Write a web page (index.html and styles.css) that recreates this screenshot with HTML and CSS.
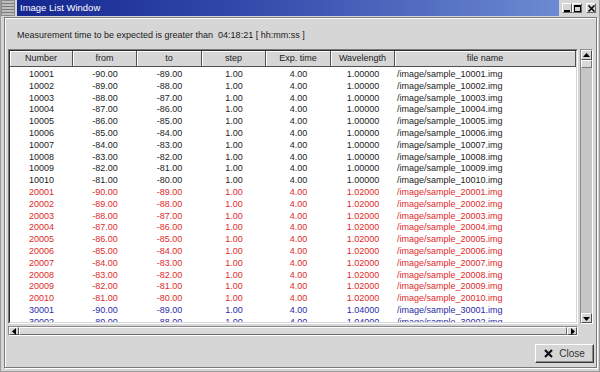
FILE: index.html
```html
<!DOCTYPE html>
<html lang="en">

<head>
  <meta charset="UTF-8">
  <title>Image List Window</title>
  <link rel="stylesheet" href="styles.css">
</head>

<body>
  <div class="window">
    <div class="titlebar">
      <div class="win-menu"></div>
      <div class="win-title">Image List Window</div>
      <div class="win-buttons">
        <span class="win-btn"><svg width="7" height="7" viewBox="0 0 7 7"><rect x="0" y="5" width="6" height="2" fill="#000"/></svg></span>
        <span class="win-btn"><svg width="7" height="7" viewBox="0 0 7 7"><rect x="0.5" y="0.5" width="6" height="6" fill="none" stroke="#000"/><rect x="0" y="0" width="7" height="2" fill="#000"/></svg></span>
        <span class="win-btn gap"><svg width="7" height="7" viewBox="0 0 7 7"><path d="M0.5 0.5 L6.5 6.5 M6.5 0.5 L0.5 6.5" stroke="#000" stroke-width="1.5"/></svg></span>
      </div>
    </div>

    <div class="frame">
      <div class="label">Measurement time to be expected is greater than &nbsp;04:18:21 [ hh:mm:ss ]</div>

      <div class="table-frame">
        <div class="viewport">
          <div class="viewport-inner">
            <div class="row header">
              <span class="c1">Number</span><span class="c2">from</span><span class="c3">to</span><span class="c4">step</span><span class="c5">Exp. time</span><span class="c6">Wavelength</span><span class="c7">file name</span>
            </div>
            <div class="rows" id="rows"></div>
          </div>
        </div>

        <div class="vscroll">
          <span class="sbtn"><svg width="7" height="5" viewBox="0 0 7 5"><path d="M3.5 0 L7 4 L0 4 Z" fill="#000"/></svg></span>
          <span class="vthumb"></span>
          <span class="vtrack"></span>
          <span class="sbtn"><svg width="7" height="5" viewBox="0 0 7 5"><path d="M0 1 L7 1 L3.5 5 Z" fill="#000"/></svg></span>
        </div>

        <div class="hscroll">
          <span class="sbtn"><svg width="5" height="7" viewBox="0 0 5 7"><path d="M0 3.5 L4 0 L4 7 Z" fill="#000"/></svg></span>
          <span class="hthumb"></span>
          <span class="sbtn"><svg width="5" height="7" viewBox="0 0 5 7"><path d="M1 0 L5 3.5 L1 7 Z" fill="#000"/></svg></span>
        </div>
        <div class="corner"></div>
      </div>

      <div class="footer">
        <button class="close-btn">
          <svg width="9" height="9" viewBox="0 0 9 9"><path d="M1 1 L8 8 M8 1 L1 8" stroke="#111" stroke-width="2.2"/></svg>
          <span>Close</span>
        </button>
      </div>
    </div>
  </div>

  <script>
    // three measurement groups of images, differ only by wavelength
    // only the rows that reach into the visible part are built
    const groups = [
      { base: 10000, wave: '1.00000', cls: 'black', count: 10 },
      { base: 20000, wave: '1.02000', cls: 'red', count: 10 },
      { base: 30000, wave: '1.04000', cls: 'blue', count: 2 }
    ]
    const rowsEl = document.getElementById('rows')
    let html = ''
    groups.forEach(g => {
      for (let i = 1; i <= g.count; i++) {
        const num = g.base + i
        const from = (-91 + i).toFixed(2)
        const to = (-90 + i).toFixed(2)
        html += `<div class="row ${g.cls}">` +
          `<span class="c1">${num}</span><span class="c2">${from}</span><span class="c3">${to}</span>` +
          `<span class="c4">1.00</span><span class="c5">4.00</span><span class="c6">${g.wave}</span>` +
          `<span class="c7">/image/sample_${num}.img</span></div>`
      }
    })
    rowsEl.innerHTML = html
  </script>
</body>

</html>
```

FILE: styles.css
```css
* {
  margin: 0;
  padding: 0;
  box-sizing: border-box;
}

body {
  width: 600px;
  height: 372px;
  overflow: hidden;
  background: #d6d6d6;
  font-family: "Liberation Sans", Arial, sans-serif;
  font-size: 9px;
  color: #1a1a1a;
}

/* 整个窗口 */
.window {
  width: 600px;
  height: 372px;
  display: flex;
  flex-direction: column;
  background: #d6d6d6;
  border: 1px solid #9a9a9a;
  border-top: none;
}

/* 标题栏 */
.titlebar {
  height: 16px;
  display: flex;
  align-items: stretch;
  flex-shrink: 0;
}

.win-menu {
  width: 14px;
  margin-right: 2px;
  background: repeating-linear-gradient(180deg, #bdbdbd 0 2px, #7c7c7c 2px 3px);
  border: 1px solid #8a8a8a;
}

.win-title {
  flex: 1;
  padding: 2px 0 0 3px;
  font-size: 9.5px;
  color: #fff;
  background: linear-gradient(90deg, #142690, #3a52b0 50%, #6c8ad2);
}

.win-buttons {
  width: 40px;
  display: flex;
  align-items: flex-start;
  padding: 3px 0 0 3px;
  background: #d6d6d6;
}

.win-btn {
  width: 10px;
  height: 10px;
  display: flex;
  align-items: center;
  justify-content: center;
  background: #d6d6d6;
  border: 1px solid;
  border-color: #fff #6a6a6a #6a6a6a #fff;
}

.win-btn.gap {
  margin-left: 4px;
}

/* 内部框 */
.frame {
  flex: 1;
  margin: 1px 2px 3px 3px;
  border: 1px solid #7a7a7a;
  box-shadow: inset 1px 1px #fff, 1px 1px #fff;
  display: flex;
  flex-direction: column;
}

.label {
  padding: 11px 0 0 12px;
  line-height: 12px;
  height: 31px;
}

/* 表格 + 滚动条 */
.table-frame {
  margin-left: 3px;
  display: grid;
  grid-template-columns: 570px 13px;
  grid-template-rows: 275px 10px;
  column-gap: 2px;
  row-gap: 2px;
}

.viewport {
  border: 1px solid;
  border-color: #7a7a7a #fff #fff #7a7a7a;
  overflow: hidden;
}

.viewport-inner {
  height: 100%;
  border: 1px solid;
  border-color: #2e2e2e #d6d6d6 #d6d6d6 #2e2e2e;
  background: #fff;
  overflow: hidden;
}

.row {
  display: flex;
  height: 11.8px;
  line-height: 11.8px;
  white-space: nowrap;
}

.row span {
  flex-shrink: 0;
  text-align: center;
}

.row .c1 { width: 63px; }
.row .c2 { width: 64px; }
.row .c3 { width: 65px; }
.row .c4 { width: 64px; }
.row .c5 { width: 65px; }
.row .c6 { width: 64px; }
.row .c7 { width: 181px; text-align: left; padding-left: 2px; }

.row.header {
  height: 16px;
  line-height: 15px;
  background: #d6d6d6;
  color: #222;
}

.row.header span {
  border-right: 1px solid #505050;
  border-bottom: 1px solid #505050;
  box-shadow: inset 1px 1px #fff;
}

.row.header .c7 {
  text-align: center;
  padding-left: 0;
}

.rows {
  padding-top: 2px;
}

.row.black { color: #1c1c1c; }
.row.red { color: #e02a2a; }
.row.blue { color: #2b2ba8; }

/* 滚动条 */
.sbtn {
  display: flex;
  align-items: center;
  justify-content: center;
  background: #d6d6d6;
  border: 1px solid;
  border-color: #fff #505050 #505050 #fff;
  flex-shrink: 0;
}

.vscroll {
  display: flex;
  flex-direction: column;
  background: #c6c6c6;
  border: 1px solid;
  border-color: #8a8a8a #fff #fff #8a8a8a;
}

.vscroll .sbtn {
  height: 10px;
}

.vthumb {
  height: 8px;
  background: #d9d9d9;
  border: 1px solid;
  border-color: #fff #7a7a7a #7a7a7a #fff;
}

.vtrack {
  flex: 1;
}

.hscroll {
  display: flex;
  background: #c6c6c6;
  border: 1px solid;
  border-color: #8a8a8a #fff #fff #8a8a8a;
}

.hscroll .sbtn {
  width: 10px;
}

.hthumb {
  flex: 1;
  background: #d9d9d9;
  border: 1px solid;
  border-color: #fff #6a6a6a #6a6a6a #fff;
}

.corner {
  background: #d6d6d6;
}

/* 底部按钮 */
.footer {
  flex: 1;
  display: flex;
  justify-content: flex-end;
  align-items: flex-start;
  padding: 8px 2px 0 0;
}

.close-btn {
  width: 59px;
  height: 19px;
  display: flex;
  align-items: center;
  justify-content: center;
  gap: 6px;
  background: #d6d6d6;
  font-family: "Liberation Sans", Arial, sans-serif;
  font-size: 10px;
  color: #333;
  border: 1px solid;
  border-color: #fff #3a3a3a #3a3a3a #fff;
  box-shadow: inset -1px -1px #8a8a8a;
}
```
